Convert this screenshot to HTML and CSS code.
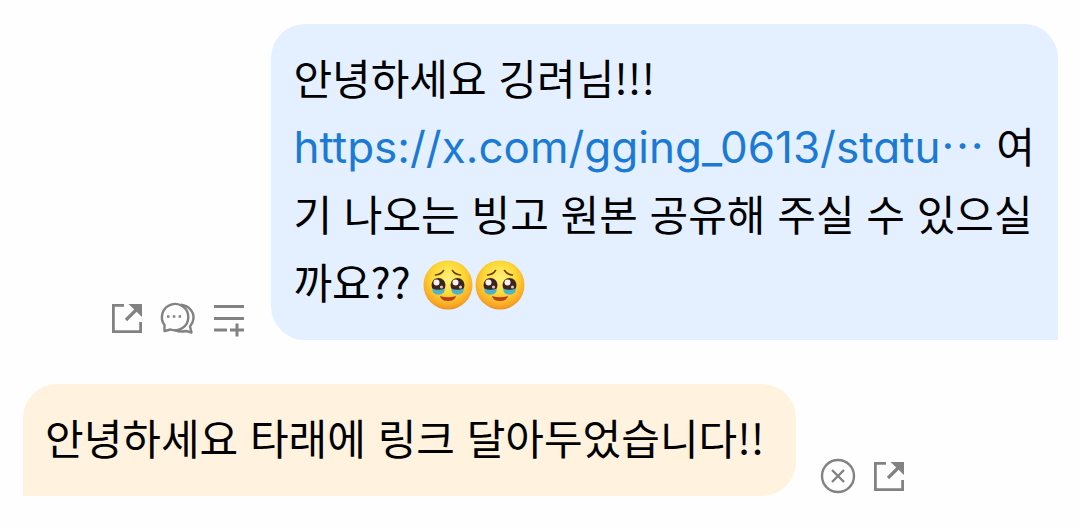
FILE: index.html
```html
<!DOCTYPE html>
<html lang="ko">
<head>
  <meta charset="UTF-8">
  <meta name="viewport" content="width=device-width, initial-scale=1.0">
  <title>메시지</title>
  <link rel="stylesheet" href="styles.css">
</head>
<body>
  <!-- Shared icons -->
  <svg class="sprite" aria-hidden="true">
    <defs>
      <radialGradient id="face" cx="50%" cy="36%" r="66%">
        <stop offset="0" stop-color="#fff27a"/>
        <stop offset="0.5" stop-color="#fdd835"/>
        <stop offset="0.85" stop-color="#f9a825"/>
        <stop offset="1" stop-color="#e78a1e"/>
      </radialGradient>
    </defs>
    <symbol id="icon-share" viewBox="0 0 36 36">
      <path d="M15 5.300H4.400V31.700H31.600V22" fill="none" stroke="currentColor" stroke-width="2.800"/>
      <path d="M17 20L27 10" fill="none" stroke="currentColor" stroke-width="3.200"/>
      <path d="M19.500 4H33V17z" fill="currentColor"/>
    </symbol>
    <symbol id="icon-tears" viewBox="0 0 52 52">
      <circle cx="26" cy="26" r="24.500" fill="url(#face)"/>
      <path d="M13.500 16Q19 15.500 21.500 11.500M30.500 11.500Q33 15.500 38.500 16" fill="none" stroke="#6b3f12" stroke-width="1.600" stroke-linecap="round"/>
      <circle cx="16.500" cy="26" r="7" fill="#3b2420"/>
      <circle cx="35.500" cy="26" r="7" fill="#3b2420"/>
      <path d="M10 29.500Q16.500 32 23 29.500L22 33.500Q16.500 38 11 33.500z" fill="#4fb3c8"/>
      <path d="M29 29.500Q35.500 32 42 29.500L41 33.500Q35.500 38 30 33.500z" fill="#4fb3c8"/>
      <circle cx="14.500" cy="23.500" r="3" fill="#fff1ee"/>
      <circle cx="33.500" cy="23.500" r="3" fill="#fff1ee"/>
      <circle cx="19.500" cy="28" r="1.600" fill="#d9c4c0"/>
      <circle cx="38.500" cy="28" r="1.600" fill="#d9c4c0"/>
      <path d="M18 37Q26 39.500 34 37Q33 42 26 42Q19 42 18 37z" fill="#b5401c"/>
    </symbol>
  </svg>

  <main class="chat">
    <div class="message sent">
      <div class="actions">
        <button type="button" aria-label="공유"><svg viewBox="0 0 36 36"><use href="#icon-share"/></svg></button>
        <button type="button" aria-label="답장">
          <svg viewBox="0 0 36 36" fill="none" stroke="currentColor" stroke-width="2.400" stroke-linejoin="round">
            <path d="M4.500 25V31L10.500 29.500A13.200 13.200 0 1 0 4.500 25z"/>
            <path d="M21 4.800C29.500 6 34 12 33.500 18.500C33.300 22 31.500 24.500 30 26.500L31.500 32.500L26 31C22 32 18 31.500 14.500 29.800"/>
            <path d="M7 16.500h2.500M12.800 16.500h2.500M18.600 16.500h2.500"/>
          </svg>
        </button>
        <button type="button" aria-label="목록에 추가">
          <svg viewBox="0 0 36 36" fill="none" stroke="currentColor" stroke-width="3">
            <path d="M3 6.500H33M3 18.500H33M3 30H16M19 30H33M26 23.500V36.500"/>
          </svg>
        </button>
      </div>
      <p class="bubble">안녕하세요 깅려님!!!<br><a href="#">https://x.com/gging_0613/statu⋯</a> 여기 나오는 빙고 원본 공유해 주실 수 있으실까요?? <svg class="emoji" role="img" aria-label="🥹"><use href="#icon-tears"/></svg><svg class="emoji" role="img" aria-label="🥹"><use href="#icon-tears"/></svg></p>
    </div>

    <div class="message received">
      <p class="bubble">안녕하세요 타래에 링크 달아두었습니다!!</p>
      <div class="actions">
        <button type="button" aria-label="삭제">
          <svg viewBox="0 0 36 36" fill="none" stroke="currentColor" stroke-width="2.400">
            <circle cx="18" cy="18" r="16"/>
            <path d="M12 12L24 24M24 12L12 24"/>
          </svg>
        </button>
        <button type="button" aria-label="공유"><svg viewBox="0 0 36 36"><use href="#icon-share"/></svg></button>
      </div>
    </div>
  </main>
</body>
</html>
```
FILE: styles.css
```css
* {
  box-sizing: border-box;
}

body {
  margin: 0;
  background-color: #fefefe;
  color: #000000;
  font-family: "Noto Sans CJK KR", sans-serif;
  font-size: 42px;
  line-height: 68px;
}

.sprite {
  position: absolute;
  width: 0;
  height: 0;
}

.chat {
  display: flex;
  flex-direction: column;
  gap: 44px;
  padding: 24px 22px 24px 23px;
}

.message {
  display: flex;
  align-items: flex-end;
  gap: 24px;
}

.sent {
  justify-content: flex-end;
}

.bubble {
  max-width: 76%;
  margin: 0;
  padding: 19px 22px 25px;
  border-radius: 34px;
}

.sent .bubble {
  background-color: #e4f0ff;
  border-bottom-right-radius: 0;
}

.received .bubble {
  padding-right: 32px;
  background-color: #fff3df;
  border-bottom-left-radius: 0;
}

.bubble a {
  color: #1a7ad4;
  font-family: Inter, "Noto Sans CJK KR", sans-serif;
  font-size: 44px;
  font-feature-settings: "cv11";
  line-height: 1;
  text-decoration: none;
}

.emoji {
  width: 52px;
  height: 52px;
  vertical-align: -12px;
}

.actions {
  display: flex;
  flex-shrink: 0;
  gap: 15px;
  padding-bottom: 2px;
}

.actions button {
  width: 36px;
  height: 36px;
  padding: 0;
  border: none;
  background: none;
  color: #828282;
  cursor: pointer;
}

.sent .actions {
  padding-bottom: 4px;
}

.actions svg {
  display: block;
  width: 36px;
  height: 36px;
  overflow: visible;
}
```
